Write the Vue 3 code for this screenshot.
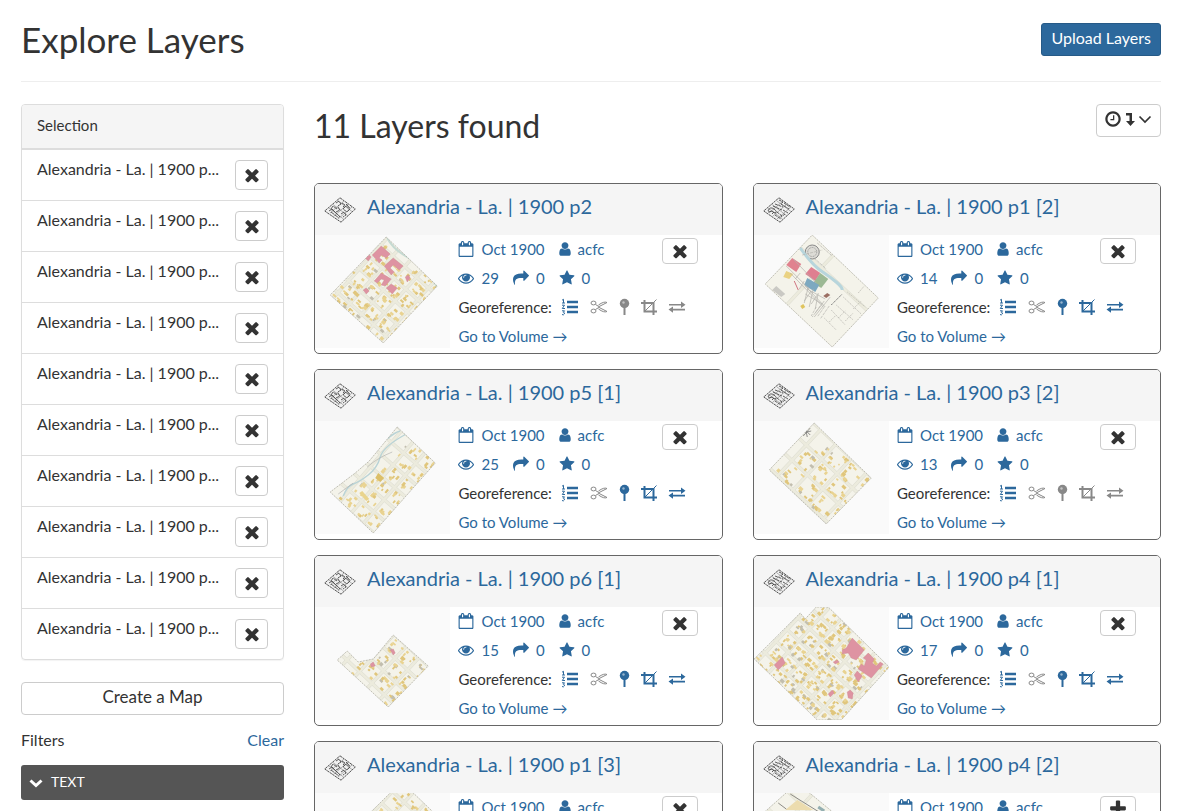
<script setup>
const glyphs = {
  calendar: 'M192 1664h1408v-1024h-1408v1024zm384-1216v-288q0-14-9-23t-23-9h-64q-14 0-23 9t-9 23v288q0 14 9 23t23 9h64q14 0 23-9t9-23zm768 0v-288q0-14-9-23t-23-9h-64q-14 0-23 9t-9 23v288q0 14 9 23t23 9h64q14 0 23-9t9-23zm384-64v1280q0 52-38 90t-90 38h-1408q-52 0-90-38t-38-90v-1280q0-52 38-90t90-38h128v-96q0-66 47-113t113-47h64q66 0 113 47t47 113v96h384v-96q0-66 47-113t113-47h64q66 0 113 47t47 113v96h128q52 0 90 38t38 90z',
  user: 'M1536 1399q0 109-62.5 187t-150.5 78h-854q-88 0-150.5-78t-62.5-187q0-85 8.5-160.5t31.5-152 58.5-131 94-89 134.5-34.5q131 128 313 128t313-128q76 0 134.5 34.5t94 89 58.5 131 31.5 152 8.5 160.5zm-256-887q0 159-112.5 271.5t-271.5 112.5-271.5-112.5-112.5-271.5 112.5-271.5 271.5-112.5 271.5 112.5 112.5 271.5z',
  eye: 'M1664 960q-152-236-381-353 61 104 61 225 0 185-131.5 316.5t-316.5 131.5-316.5-131.5-131.5-316.5q0-121 61-225-229 117-381 353 133 205 333.5 326.5t434.5 121.5 434.5-121.5 333.5-326.5zm-720-384q0-20-14-34t-34-14q-125 0-214.5 89.5t-89.5 214.5q0 20 14 34t34 14 34-14 14-34q0-86 61-147t147-61q20 0 34-14t14-34zm848 384q0 34-20 69-140 230-376.5 368.5t-499.5 138.5-499.5-139-376.5-368q-20-35-20-69t20-69q140-229 376.5-368t499.5-139 499.5 139 376.5 368q20 35 20 69z',
  share: 'M1792 640q0 26-19 45l-512 512q-19 19-45 19t-45-19-19-45v-256h-224q-98 0-175.5 6t-154 21.5-133 42.5-105.5 69.5-80 101-48.5 138.5-17.5 181q0 55 5 123 0 6 2.5 23.5t2.5 26.5q0 15-8.5 25t-23.5 10q-16 0-28-17-7-9-13-22t-13.5-30-10.5-24q-127-285-127-451 0-199 53-333 162-403 875-403h224v-256q0-26 19-45t45-19 45 19l512 512q19 19 19 45z',
  star: 'M1728 647q0 22-26 48l-363 354 86 500q1 7 1 20 0 21-10.5 35.5t-30.5 14.5q-19 0-40-12l-449-236-449 236q-22 12-40 12-21 0-31.5-14.5t-10.5-35.5q0-6 2-20l86-500-364-354q-25-27-25-48 0-37 56-46l502-73 225-455q19-41 49-41t49 41l225 455 502 73q56 9 56 46z',
  times: 'M1490 1322q0 40-28 68l-136 136q-28 28-68 28t-68-28l-294-294-294 294q-28 28-68 28t-68-28l-136-136q-28-28-28-68t28-68l294-294-294-294q-28-28-28-68t28-68l136-136q28-28 68-28t68 28l294 294 294-294q28-28 68-28t68 28l136 136q28 28 28 68t-28 68l-294 294 294 294q28 28 28 68z',
  plus: 'M1600 736v192q0 40-28 68t-68 28h-416v416q0 40-28 68t-68 28h-192q-40 0-68-28t-28-68v-416h-416q-40 0-68-28t-28-68v-192q0-40 28-68t68-28h416v-416q0-40 28-68t68-28h192q40 0 68 28t28 68v416h416q40 0 68 28t28 68z',
  clock: 'M1024 544v448q0 14-9 23t-23 9h-320q-14 0-23-9t-9-23v-64q0-14 9-23t23-9h224v-352q0-14 9-23t23-9h64q14 0 23 9t9 23zm416 352q0-148-73-273t-198-198-273-73-273 73-198 198-73 273 73 273 198 198 273 73 273-73 198-198 73-273zm224 0q0 209-103 385.5t-279.5 279.5-385.5 103-385.5-103-279.5-279.5-103-385.5 103-385.5 279.5-279.5 385.5-103 385.5 103 279.5 279.5 103 385.5z'
}

function random(seed) {
  let s = seed * 7919 + 17
  return () => {
    s = (s * 16807) % 2147483647
    return s / 2147483647
  }
}

function inside(x, y, pts) {
  let hit = false
  for (let i = 0, j = pts.length - 1; i < pts.length; j = i++) {
    const [xi, yi] = pts[i]
    const [xj, yj] = pts[j]
    if (yi > y !== yj > y && x < ((xj - xi) * (y - yi)) / (yj - yi) + xi) hit = !hit
  }
  return hit
}

// Fills a sheet outline with street lines and building footprints on a rotated grid.
function buildSheet({ seed, outline, angle, block = 16, density = 7, bare = [] }) {
  const rnd = random(seed)
  const rad = (angle * Math.PI) / 180
  const cos = Math.cos(rad)
  const sin = Math.sin(rad)
  const buildings = []
  const lots = []
  for (let u = -96; u < 96; u += block) {
    for (let v = -96; v < 96; v += block) {
      lots.push({ x: u + 1, y: v + 1, s: block - 3 })
      for (let n = 0; n < density; n++) {
        const edge = rnd() < 0.5
        const a = u + 2 + rnd() * (block - 7)
        const b = v + 2 + (rnd() < 0.5 ? rnd() * 3 : block - 8 + rnd() * 3)
        const bx = edge ? a : b - v + u
        const by = edge ? b : a - u + v
        const w = 1.5 + rnd() * 3
        const h = 1.5 + rnd() * 2
        const tone = rnd()
        const px = 68 + bx * cos - by * sin
        const py = 56 + bx * sin + by * cos
        if (!inside(px, py, outline) || bare.some(([cx, cy, r]) => Math.hypot(px - cx, py - cy) < r)) continue
        buildings.push({ x: bx, y: by, w, h, fill: tone < 0.1 ? '#c2beae' : tone < 0.6 ? '#e0c67c' : '#e9d391' })
      }
    }
  }
  return { points: outline.map((p) => p.join(',')).join(' '), angle, lots, buildings }
}

const sheets = [
  {
    seed: 3, angle: 42, density: 9, outline: [[71, 2], [122, 51], [68, 108], [15, 60]], bare: [[95, 25, 11], [83, 14, 8]],
    brick: 'm57 20 9-9 9 8-4 4-5-3-2 3 3 2-3 3zM69 31l9-8 10 8-4 4-6-5-3 3 4 4-3 3zM59 46l7-8 10 6-6 7-4-1 3-5-3-1-4 4zM71 53l5-4 6 4-5 6zM48 55l3-2 3 3-3 3zM90 42l3-2 2 3-3 4zM50 23l3-4 3 3-3 4z'
  },
  { seed: 5, angle: 43, density: 0, block: 80, outline: [[58, 0], [124, 63], [78, 112], [11, 49]], kind: 'index' },
  { seed: 8, angle: -49, density: 6, outline: [[82, 6], [120, 42], [58, 112], [15, 71], [40, 52], [54, 40]], bare: [[50, 50, 12], [66, 32, 14], [82, 12, 14], [20, 70, 8], [34, 62, 8]], kind: 'river' },
  { seed: 4, angle: 43, density: 11, block: 21, outline: [[60, 2], [117, 57], [72, 103], [15, 49]], bare: [[52, 12, 18], [35, 27, 13]] },
  {
    seed: 6, angle: 43, density: 8, block: 17, outline: [[78, 28], [113, 59], [73, 100], [22, 53], [32, 44], [43, 55], [58, 52]], bare: [[31, 53, 10], [45, 70, 7], [62, 88, 7]],
    brick: 'm75 43 3-1 2 4-2 2zM55 57l3-2 2 4-4 1z'
  },
  {
    seed: 7, angle: 43, density: 10, outline: [[0, 52], [46, 6], [51, 12], [62, 0], [74, 0], [135, 60], [87, 113], [63, 113]],
    brick: 'm88 43 4-2 6-10 12 12-8 10-5-2-3-5-6 1zM104 62l3-5 3 2 2-6-3-2 5-5 6 6-2 4 4 3 4-4 3 2-12 14zM20 58l8-8 3 6-7 7zM100 68l3-4 5 5-4 6zM74 87l4-4 2 3-4 4zM93 85l3-2 3 3-1 6-4-1zM79 55l4-2 2 2-4 2z'
  },
  { seed: 9, angle: 43, density: 4, outline: [[77, -2], [96, -2], [151, 51], [84, 112], [19, 55]] },
  { seed: 11, angle: 43, density: 0, block: 26, outline: [[34, -2], [53, -2], [122, 55], [61, 112], [-2, 30]], kind: 'wards' }
].map((s) => ({ ...buildSheet(s), kind: s.kind, brick: s.brick }))

const layers = [
  { name: 'p2', views: 29, trimmed: false, selected: true },
  { name: 'p1 [2]', views: 14, trimmed: true, selected: true },
  { name: 'p5 [1]', views: 25, trimmed: true, selected: true },
  { name: 'p3 [2]', views: 13, trimmed: false, selected: true },
  { name: 'p6 [1]', views: 15, trimmed: true, selected: true },
  { name: 'p4 [1]', views: 17, trimmed: true, selected: true },
  { name: 'p1 [3]', views: 12, trimmed: true, selected: true },
  { name: 'p4 [2]', views: 16, trimmed: true, selected: false }
].map((l, i) => ({ ...l, sheet: sheets[i] }))
</script>

<template>
  <div class="page">
    <header class="page-header">
      <h1>Explore Layers</h1>
      <a href="#" class="upload">Upload Layers</a>
    </header>

    <div class="columns">
      <aside>
        <section class="panel">
          <h2 class="panel-title">Selection</h2>
          <ul>
            <li v-for="n in 10" :key="n">
              <span class="item-name">Alexandria - La. | 1900 p...</span>
              <button type="button" class="btn remove" aria-label="Remove from selection">
                <svg class="cross" viewBox="0 0 1792 1792"><path :d="glyphs.times" /></svg>
              </button>
            </li>
          </ul>
        </section>
        <button type="button" class="btn create">Create a Map</button>
        <div class="filters">
          <span>Filters</span>
          <a href="#">Clear</a>
        </div>
        <button type="button" class="filter-bar">
          <svg class="line" viewBox="0 0 14 14"><path d="M1.500 4.500 7 9.500 12.500 4.500" stroke-width="3" /></svg>
          <span>TEXT</span>
        </button>
      </aside>

      <main>
        <div class="results-head">
          <h2>11 Layers found</h2>
          <button type="button" class="btn sort" aria-label="Sort order">
            <svg class="clock" viewBox="0 0 1792 1792"><path :d="glyphs.clock" /></svg>
            <svg class="turn" viewBox="0 0 10 14"><path d="M1 1H7V9H10L5.500 14 1 9H4.500V3.500H1Z" /></svg>
            <svg class="caret line" viewBox="0 0 14 14"><path d="M1.500 4.500 7 10 12.500 4.500" stroke-width="1.700" /></svg>
          </button>
        </div>

        <div class="cards">
          <article v-for="(layer, i) in layers" :key="layer.name" class="card">
            <div class="card-head">
              <svg class="layer-icon" viewBox="0 0 32 26">
                <path d="M16 .8 31.300 12 17 25.200 .7 14Z" fill="#f0f0f0" stroke="#555" stroke-width="1" stroke-dasharray="2.500 .6" />
                <g fill="none" stroke="#4a4a4a" stroke-width=".9">
                  <path d="M9 7.500 23.500 18.500M5 11 19.500 22M14 4 28 14.500M10 19 24 7M6 16 20 4M14 22 28 10" stroke-width=".4" />
                  <template v-if="i % 2">
                    <path d="m16 3 4 2-2 2M21 6l6 4M12 7l8 3M10 9l9 4M18 7l8 5M14 15l5 4M20 13l5 3M12 18l6 4M22 17l-4 3" stroke-dasharray="3 .7" />
                    <path d="M5 14q2-5 6-2t1 4q-3-3-7-1M9 17l2-2" />
                  </template>
                  <template v-else>
                    <path d="m12 6 3-2 2 3-3 2M18 6l3 2-2 2M7 12l2-3 4 3M14 10l2 3-4 2M19 12l3-3 4 3-3 3-4-3M17 17l3-2 2 3-3 2M11 15l5 5M7 15l8 6M22 7l4 4" stroke-dasharray="4 .6" />
                    <path d="m5 14 3-2 3 3" />
                  </template>
                </g>
              </svg>
              <h3><a href="#">Alexandria - La. | 1900 {{ layer.name }}</a></h3>
            </div>
            <div class="card-body">
              <svg class="thumb" viewBox="0 0 135 113" role="img" :aria-label="'Map sheet ' + layer.name">
                <defs>
                  <clipPath :id="'sheet-' + i"><polygon :points="layer.sheet.points" /></clipPath>
                </defs>
                <g :clip-path="`url(#sheet-${i})`">
                  <rect x="-5" y="-5" width="150" height="125" fill="#ecebdd" />
                  <g :transform="`translate(68 56) rotate(${layer.sheet.angle})`">
                    <rect v-for="(lot, n) in layer.sheet.lots" :key="'l' + n" :x="lot.x" :y="lot.y" :width="lot.s" :height="lot.s" fill="#f4f3ea" stroke="#d8d7cc" stroke-width=".5" />
                    <rect v-for="(b, n) in layer.sheet.buildings" :key="'b' + n" :x="b.x" :y="b.y" :width="b.w" :height="b.h" :fill="b.fill" />
                  </g>
                  <path v-if="layer.sheet.brick" :d="layer.sheet.brick" fill="#de93a2" stroke="#c98a8f" stroke-width=".4" />
                  <path v-if="i === 0" d="M72 3q6 12 22 20t28 29" fill="none" stroke="#c5dad2" stroke-width="2" />
                  <g v-if="layer.sheet.kind === 'river'" fill="none">
                    <path d="M28 75q4-10 10-12t15-9 12-18 28-24M72 18q8-7 13-8" stroke="#b9d3d6" stroke-width="1.400" />
                    <path d="M23 73 38 62M52 46q10-9 25-15" stroke="#aaa" stroke-width=".6" />
                    <path d="m63 52 6 5-4 4-5-4z" fill="#dcbf68" />
                    <path d="m47 70 7 8-3 2-7-8z" fill="#e9d48d" />
                  </g>
                  <g v-if="layer.sheet.kind === 'wards'" fill="none">
                    <path d="m43 7 16 10H31z" fill="#ecdcae" />
                    <path d="m24 10 8 6M36 1l32 20" stroke="#8c8b85" />
                    <path d="m64 14 6 4" stroke="#93aeb0" stroke-width="3" />
                  </g>
                  <g v-if="layer.sheet.kind === 'index'">
                    <circle cx="58" cy="17" r="7" fill="#dddcd6" stroke="#888" />
                    <circle cx="58" cy="17" r="4.500" fill="none" stroke="#999" stroke-dasharray="1 .7" />
                    <path d="M46 13q12 17 21 23t15 11 6 8" fill="none" stroke="#b7d5dc" stroke-width="3" />
                    <path d="m38 23 9 6-5 8-10-7z" fill="#e0828f" />
                    <path d="m57 32 9 6-5 8-10-7z" fill="#df7f90" />
                    <path d="m66 38 8 6-7 9-8-5z" fill="#9cb994" />
                    <path d="m53 43 12 7-4 7-11-7z" fill="#7da9c0" />
                    <path d="m32 36 7 3-4 5-6-2z" fill="#ead282" />
                    <path d="M40 46 44 55" stroke="#cf7480" />
                    <path d="m46 71 3-2 2 3-3 2z" fill="#dfc45d" />
                    <path d="m18 55 4-4 9 8-4 3z" fill="#cac9c4" />
                    <g fill="none" stroke="#b4b3ae" stroke-width=".7">
                      <path d="m39 24 23 24m-11 3 20 21M36 38l33 34M32 31l23 23M46 38l-5 6M50 46l-5 8M57 56l-7 10M63 60l-6 9M70 66l-9 12M76 62l-16 20" />
                      <path d="m53 54 18 10m-20-5 17 10m-14-17-4 16m9-14-4 18m9-14-3 16" />
                      <path d="m62 72-5 9m9-10-8 11m12-10-7 10m12-11-9 13M48 20l20-5M63 8l15 13M60 23l12 11" stroke-dasharray="3 1" />
                      <path d="m77 70 11-11" stroke="#777" stroke-width="1" stroke-dasharray="1.500 .7" />
                      <path d="m77 75 14 15m-9-20 17 15m-10-23 18 17M93 57l18 15M70 83l12 12M84 83l7-7m0 10 8-8m0-4 8-8m-3-8 6-7M75 87l6-6" stroke-dasharray="1.500 .8" />
                    </g>
                    <path d="m69 61 4-3 3 2-4 3z" fill="#9b6f63" />
                  </g>
                  <path v-if="i === 3" d="m48 12 9-2m-7-2 6 6m-5-8 2 10m3-9-7 8" stroke="#777" stroke-width=".8" />
                </g>
                <polygon :points="layer.sheet.points" fill="none" stroke="#aaa99f" stroke-width=".7" stroke-dasharray="2 1" />
              </svg>
              <div class="details">
                <div class="row">
                  <a href="#" class="meta date"><svg class="ic16" viewBox="0 0 1792 1792"><path :d="glyphs.calendar" /></svg>Oct 1900</a>
                  <a href="#" class="meta person"><svg class="ic16" viewBox="0 0 1792 1792"><path :d="glyphs.user" /></svg>acfc</a>
                </div>
                <div class="row stats">
                  <a href="#" class="meta"><svg class="ic16" viewBox="0 0 1792 1792"><path :d="glyphs.eye" /></svg>{{ layer.views }}</a>
                  <a href="#" class="meta"><svg class="ic16" viewBox="0 0 1792 1792"><path :d="glyphs.share" /></svg>0</a>
                  <a href="#" class="meta"><svg class="ic16" viewBox="0 0 1792 1792"><path :d="glyphs.star" /></svg>0</a>
                </div>
                <div class="row geo">
                  <span>Georeference:</span>
                  <svg class="tool wide line" viewBox="0 0 18 18">
                    <path d="M6 4H17M6 9H17M6 14H17" stroke-width="2.400" />
                    <path d="M1 2.200 2.500 1.300V5M1 5H4M1 7.200H3.500L1.300 10.500H4M1 12.800H3.500L2.300 14.300Q4 14.500 3.300 16T1 16.500" stroke-width="1" />
                  </svg>
                  <svg class="tool wide line off" viewBox="0 0 18 18">
                    <ellipse cx="3.500" cy="5" rx="2.500" ry="1.900" /><ellipse cx="3.500" cy="13" rx="2.500" ry="1.900" />
                    <path d="M5.500 6.500 9 8.600 17 4.500Q14 3 8.500 7M5.500 11.500 9 9.400 17 13.500Q14 15 8.500 11" />
                  </svg>
                  <svg class="tool slim" :class="{ off: !layer.trimmed }" viewBox="0 0 11 18">
                    <circle cx="5.500" cy="5.500" r="4.700" /><path d="M4.500 10h2v7h-2z" /><circle cx="4.500" cy="4.500" r="1.200" fill="#fff" opacity=".5" />
                  </svg>
                  <svg class="tool mid line" :class="{ off: !layer.trimmed }" viewBox="0 0 16 18">
                    <path d="M0 5H12.500V17M3.500 2V13.500H16" stroke-width="2" /><path d="M3.500 13.500 15.500 1.500" />
                  </svg>
                  <svg class="tool wide" :class="{ off: !layer.trimmed }" viewBox="0 0 18 18">
                    <path d="M1 5H13V2L17.500 6 13 10V7H1ZM17 11H5V8L.5 12 5 16V13H17Z" transform="translate(0 2) scale(1 .8)" />
                  </svg>
                </div>
                <div class="row"><a href="#">Go to Volume →</a></div>
              </div>
              <button type="button" class="btn toggle" :aria-label="layer.selected ? 'Remove layer' : 'Add layer'">
                <svg class="cross" viewBox="0 0 1792 1792"><path :d="layer.selected ? glyphs.times : glyphs.plus" /></svg>
              </button>
            </div>
          </article>
        </div>
      </main>
    </div>
  </div>
</template>

<style>
html {
  overflow: hidden;
}
body {
  background: #fff;
}
</style>

<style scoped>
.page {
  box-sizing: border-box;
  height: 100vh;
  overflow: hidden;
  padding: 0 21px;
  color: #333;
  font: 16px/20px Lato, "Liberation Sans", sans-serif;
}
h1,
h2,
h3,
ul {
  margin: 0;
  padding: 0;
  font-weight: 400;
}
a {
  color: #2c689c;
  text-decoration: none;
}
svg {
  flex: none;
  fill: currentColor;
}
.line {
  fill: none;
  stroke: currentColor;
}
button {
  font: inherit;
  color: inherit;
  cursor: pointer;
}
.page-header {
  display: flex;
  justify-content: space-between;
  align-items: flex-start;
  box-sizing: border-box;
  height: 82px;
  padding-top: 23px;
  border-bottom: 1px solid #eee;
}
h1 {
  font-size: 35px;
  line-height: 32px;
}
.upload {
  box-sizing: border-box;
  height: 33px;
  padding: 4px 9px;
  border: 1px solid #265a87;
  border-radius: 3px;
  background: #2c689c;
  color: #fff;
}
.columns {
  display: grid;
  grid-template-columns: 263fr 847fr;
  gap: 30px;
  padding-top: 22px;
}
.panel {
  margin-bottom: 22px;
  border: 1px solid #ddd;
  border-radius: 4px;
  box-shadow: 0 1px 1px rgba(0, 0, 0, 0.05);
}
.panel-title {
  box-sizing: border-box;
  height: 44px;
  padding: 0 0 2px 15px;
  border-bottom: 1px solid #ddd;
  border-radius: 3px 3px 0 0;
  background: #f5f5f5;
  font-size: 15px;
  line-height: 41px;
}
ul {
  list-style: none;
}
li {
  display: flex;
  justify-content: space-between;
  box-sizing: border-box;
  height: 51px;
  padding: 10px 15px;
  border-top: 1px solid #ddd;
}
.item-name {
  white-space: nowrap;
  line-height: 18px;
}
.btn {
  display: flex;
  flex: none;
  align-items: center;
  justify-content: center;
  box-sizing: border-box;
  padding: 0;
  border: 1px solid #ccc;
  border-radius: 4px;
  background: #fff;
}
.remove {
  width: 33px;
  height: 30px;
}
.cross {
  width: 20px;
  height: 20px;
}
.create {
  width: 100%;
  height: 33px;
  padding-bottom: 4px;
  font-size: 17px;
}
.filters {
  display: flex;
  justify-content: space-between;
  padding: 15px 0;
}
.filter-bar {
  display: flex;
  align-items: center;
  gap: 8px;
  width: 100%;
  height: 35px;
  padding: 0 8px;
  border: 0;
  border-radius: 3px;
  background: #555;
  color: #fff;
  font-size: 14px;
}
.filter-bar span {
  padding-bottom: 2px;
}
.filter-bar svg {
  width: 14px;
  height: 14px;
}
.results-head {
  display: flex;
  justify-content: space-between;
  align-items: flex-start;
  height: 79px;
}
.results-head h2 {
  padding-top: 4px;
  font-size: 32px;
  line-height: 36px;
}
.sort {
  gap: 3px;
  width: 65px;
  height: 33px;
  padding: 0 2px 3px 0;
}
.ic16 {
  width: 16px;
  height: 16px;
}
.clock {
  width: 18px;
  height: 18px;
}
.turn {
  width: 10px;
  height: 14px;
}
.caret {
  width: 14px;
  height: 14px;
}
.cards {
  display: grid;
  grid-template-columns: 1fr 1fr;
  gap: 15px 30px;
}
.card {
  box-sizing: border-box;
  height: 171px;
  overflow: hidden;
  border: 1px solid #666;
  border-radius: 5px;
}
.card-head {
  display: flex;
  align-items: center;
  gap: 11px;
  height: 51px;
  padding-left: 9px;
  background: #f5f5f5;
}
.layer-icon {
  width: 32px;
  height: 26px;
}
h3 {
  padding-bottom: 8px;
  font-size: 20px;
  line-height: 24px;
}
.card-body {
  display: flex;
}
.thumb {
  width: 33.333%;
  height: 113px;
  background: #fafafa;
}
.details {
  flex: 1;
  min-width: 0;
  padding-left: 8px;
  font-size: 15px;
}
.row {
  display: flex;
  align-items: center;
  box-sizing: border-box;
  height: 29px;
  padding-bottom: 2px;
  gap: 12px;
  white-space: nowrap;
}
.meta {
  display: flex;
  align-items: center;
  gap: 7px;
}
.person {
  gap: 5px;
}
.stats {
  gap: 14px;
}
.geo {
  gap: 11px;
}
.geo span {
  margin-right: -2px;
}
.tool {
  height: 18px;
  color: #2c689c;
}
.off {
  color: #888;
}
.wide {
  width: 18px;
}
.mid {
  width: 16px;
}
.slim {
  width: 11px;
}
.toggle {
  width: 36px;
  height: 26px;
  margin: 3px 24px 0 0;
}
</style>
